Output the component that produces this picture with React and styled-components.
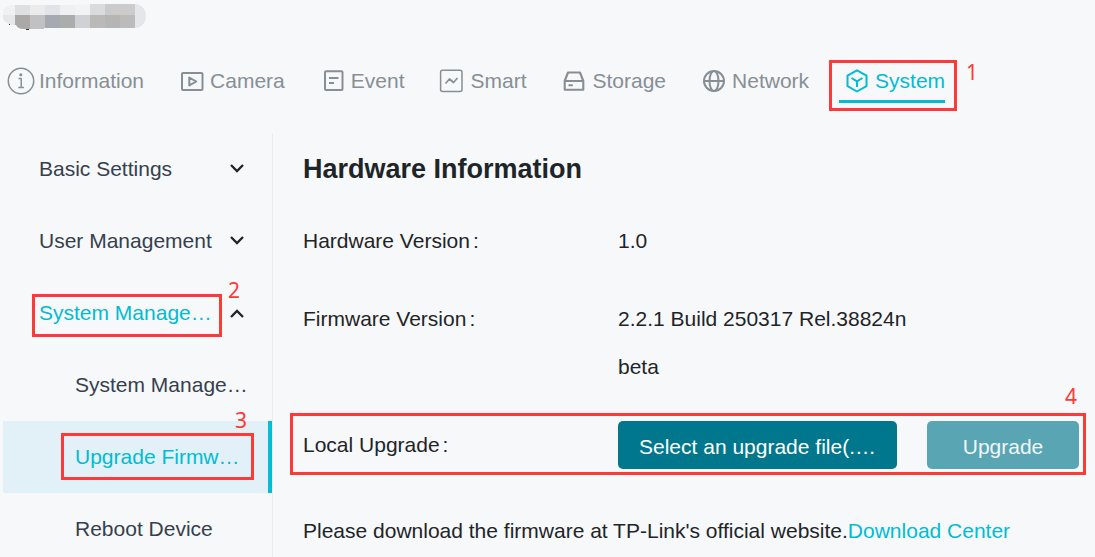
import React, { useState } from 'react';
import styled, { createGlobalStyle } from 'styled-components';

const GlobalStyle = createGlobalStyle`
    * {
        box-sizing: border-box;
    }
    body {
        margin: 0;
        background-color: #f7f8fa;
        color: #1e2528;
        font-family: "Liberation Sans", Arial, sans-serif;
        font-size: 21px;
        line-height: 48px;
    }
    button {
        font: inherit;
        border: none;
        background: none;
        padding: 0;
        cursor: pointer;
    }
`;

const Page = styled.div`
    padding-left: 3px;
    overflow: hidden;
`;
const Header = styled.header`
    height: 59px;
    padding-top: 4px;
`;
const DeviceName = styled.svg`
    display: block;
    width: 144px;
    height: 26px;
`;
const Tabs = styled.nav`
    display: flex;
    gap: 30px;
    height: 74px;
`;
const Tab = styled.button`
    position: relative;
    display: flex;
    align-items: center;
    height: 44px;
    padding-top: 2px;
    white-space: nowrap;
    color: ${props => props.$active ? '#00bcd4' : '#868f95'};
    border-bottom: 3px solid ${props => props.$active ? '#00bcd4' : 'transparent'};
`;
const TabIcon = styled.svg`
    width: 36px;
    height: 36px;
    fill: none;
    stroke: currentColor;
    stroke-width: 2;
    stroke-linejoin: round;
`;
const Columns = styled.div`
    display: flex;
`;
const Sidebar = styled.aside`
    flex: 0 0 270px;
    min-width: 0;
    border-right: 1px solid #e9ecef;
`;
const MenuItem = styled.button`
    position: relative;
    display: flex;
    align-items: center;
    justify-content: space-between;
    width: 100%;
    height: 72px;
    padding: ${props => props.$sub ? '0 8px 0 72px' : '0 27px 0 36px'};
    text-align: left;
    white-space: nowrap;
    color: ${props => props.$active ? '#00bcd4' : '#363f4d'};
    background-color: ${props => props.$selected ? '#e2f0f8' : 'transparent'};
    border-right: ${props => props.$selected ? '4px solid #00bcd4' : 'none'};
`;
const Chevron = styled.svg`
    width: 16px;
    height: 16px;
    fill: none;
    stroke: #1e2528;
    stroke-width: 2.3;
    transform: ${props => props.$open ? 'rotate(180deg)' : 'none'};
`;
const Content = styled.main`
    flex: 1;
    min-width: 0;
    padding: 12px 16px 0 30px;
`;
const Title = styled.h1`
    margin: 0 0 24px;
    font-size: 27px;
    line-height: 48px;
`;
const Row = styled.div`
    position: relative;
    display: flex;
    margin-bottom: 30px;
`;
const RowLabel = styled.div`
    flex: 0 0 315px;
    display: flex;
    gap: 3px;
`;
const RowValue = styled.div`
    flex: 0 1 300px;
`;
const Actions = styled.div`
    flex: 1;
    display: flex;
    gap: 30px;
`;
const ActionButton = styled.button`
    flex: ${props => props.$wide ? '0 1 279px' : '0 0 152px'};
    height: 48px;
    padding-top: 2px;
    border-radius: 5px;
    white-space: nowrap;
    color: #fff;
    background-color: #00778c;

    &:disabled {
        color: #f1f7f9;
        background-color: #5aa5b3;
        cursor: default;
    }
`;
const Note = styled.p`
    margin: 38px 0 0;
`;
const Link = styled.a`
    color: #00bcd4;
    text-decoration: none;
`;

// numbered red frame that lies over the step the user has to follow
const Frame = styled.span`
    position: absolute;
    inset: ${props => props.$inset};
    border: 3px solid #fc3a38;
    pointer-events: none;
`;
const StepNumber = styled.span`
    position: absolute;
    top: ${props => props.$top};
    right: ${props => props.$right};
    font-family: "Noto Sans", sans-serif;
    font-size: 21px;
    line-height: 24px;
    color: #fc3a38;
`;

const Step = ({ number, inset, top, right }) => (
    <Frame $inset={inset}>
        <StepNumber $top={top} $right={right}>{number}</StepNumber>
    </Frame>
)

const icons = {
    Information: (
        <>
            <circle cx="18" cy="18" r="12.7" strokeWidth="1.5" />
            <path d="M15.5 15.5h2.7v8.5M15.3 24.5h5.6" strokeWidth="1.5" />
            <circle cx="17.8" cy="11.8" r="1.5" fill="currentColor" stroke="none" />
        </>
    ),
    Camera: (
        <>
            <rect x="8" y="10" width="20.5" height="17" rx="1" />
            <path d="M15.3 14.6v7.8l7-3.9z" />
        </>
    ),
    Event: (
        <>
            <rect x="10" y="8.3" width="17.5" height="18.7" rx="1" />
            <path d="M14 15h9.5M14 20h5" />
        </>
    ),
    Smart: (
        <>
            <rect x="6.6" y="7.2" width="21.4" height="21.4" rx="2" strokeWidth="1.5" />
            <path d="M11.5 20.5l4-4.5 4 3.5 4-4.5" strokeWidth="1.7" />
        </>
    ),
    Storage: (
        <>
            <path d="M8.7 18l3.3-8.5h12l3.3 8.5v8.8H8.7zM8.7 18h18.6M12.5 22.3h4.3" strokeWidth="2.1" />
        </>
    ),
    Network: (
        <>
            <circle cx="18" cy="18" r="10" />
            <ellipse cx="18" cy="18" rx="4.5" ry="10" />
            <path d="M8 18h20" />
        </>
    ),
    System: (
        <>
            <path d="M18 7.3l9.5 5.3v10.6L18 28.5l-9.5-5.3V12.6z" />
            <path d="M12.5 15l5.5 3.3 5.5-3.3M18 18v6" />
        </>
    ),
}

const nameBlocks = [
    ['#f0f1f3', '#dedfe1', '#ebebeb', '#e0e4e9', '#eff0f1', '#f2f3f5', '#dadbdd', '#cbcbcc', '#cbcbcb', '#e4e6ea'],
    ['#e6e7e8', '#aaa9a7', '#c1c1c3', '#a6aab0', '#abadac', '#d0d1d5', '#bab9b8', '#b5b5b6', '#bbbbbb', '#e4e6ea'],
]

const menu = [
    { label: 'Basic Settings' },
    { label: 'User Management' },
    { label: 'System Manage…', open: true },
]

const App = () => {

    const [tab, setTab] = useState('System');

    return (
        <Page>
            <GlobalStyle />
            <Header>
                <DeviceName viewBox="3 4 144 26" aria-hidden="true">
                    <clipPath id="name">
                        <path d="M12 5H70l20-1H135a11 12 0 0 1 0 24H44v1H23q-5 0-7-4H12q-10-3-10-10 0-8 10-10z" />
                    </clipPath>
                    <g clipPath="url(#name)" shapeRendering="crispEdges">
                        {nameBlocks.map((row, y) => row.map((fill, x) => (
                            <rect key={`${x}-${y}`} x={x * 15} y={y * 15} width="15" height="15" fill={fill} />
                        )))}
                    </g>
                    <path d="M26 29.5h3M9 24.5h1" stroke="#33302e" strokeWidth="1" />
                </DeviceName>
            </Header>
            <Tabs>
                {Object.keys(icons).map(name => (
                    <Tab key={name} $active={name === tab} onClick={() => setTab(name)}>
                        <TabIcon viewBox="0 0 36 36" aria-hidden="true">{icons[name]}</TabIcon>
                        {name}
                        {name === 'System' && <Step number="1" inset="1px -12px -11px -10px" top="-3px" right="-24px" />}
                    </Tab>
                ))}
            </Tabs>
            <Columns>
                <Sidebar>
                    {menu.map(item => (
                        <MenuItem key={item.label} $active={item.open} aria-expanded={!!item.open}>
                            {item.label}
                            <Chevron viewBox="0 0 16 16" $open={item.open} aria-hidden="true">
                                <path d="M2 4l6 6 6-6" />
                            </Chevron>
                            {item.open && <Step number="2" inset="17px 50px 12px 29px" top="-19px" right="-21px" />}
                        </MenuItem>
                    ))}
                    <MenuItem $sub>System Manage…</MenuItem>
                    <MenuItem $sub $active $selected>
                        Upgrade Firmw…
                        <Step number="3" inset="12px 14px 13px 58px" top="-28px" right="4px" />
                    </MenuItem>
                    <MenuItem $sub>Reboot Device</MenuItem>
                </Sidebar>
                <Content>
                    <Title>Hardware Information</Title>
                    <Row>
                        <RowLabel>Hardware Version<span>:</span></RowLabel>
                        <RowValue>1.0</RowValue>
                    </Row>
                    <Row>
                        <RowLabel>Firmware Version<span>:</span></RowLabel>
                        <RowValue>2.2.1 Build 250317 Rel.38824n beta</RowValue>
                    </Row>
                    <Row>
                        <RowLabel>Local Upgrade<span>:</span></RowLabel>
                        <Actions>
                            <ActionButton $wide>Select an upgrade file(.…</ActionButton>
                            <ActionButton disabled>Upgrade</ActionButton>
                        </Actions>
                        <Step number="4" inset="-8px -7px -6px -13px" top="-32px" right="6px" />
                    </Row>
                    <Note>
                        Please download the firmware at TP-Link's official website.
                        <Link href="#download">Download Center</Link>
                    </Note>
                </Content>
            </Columns>
        </Page>
    )
}

export default App;
